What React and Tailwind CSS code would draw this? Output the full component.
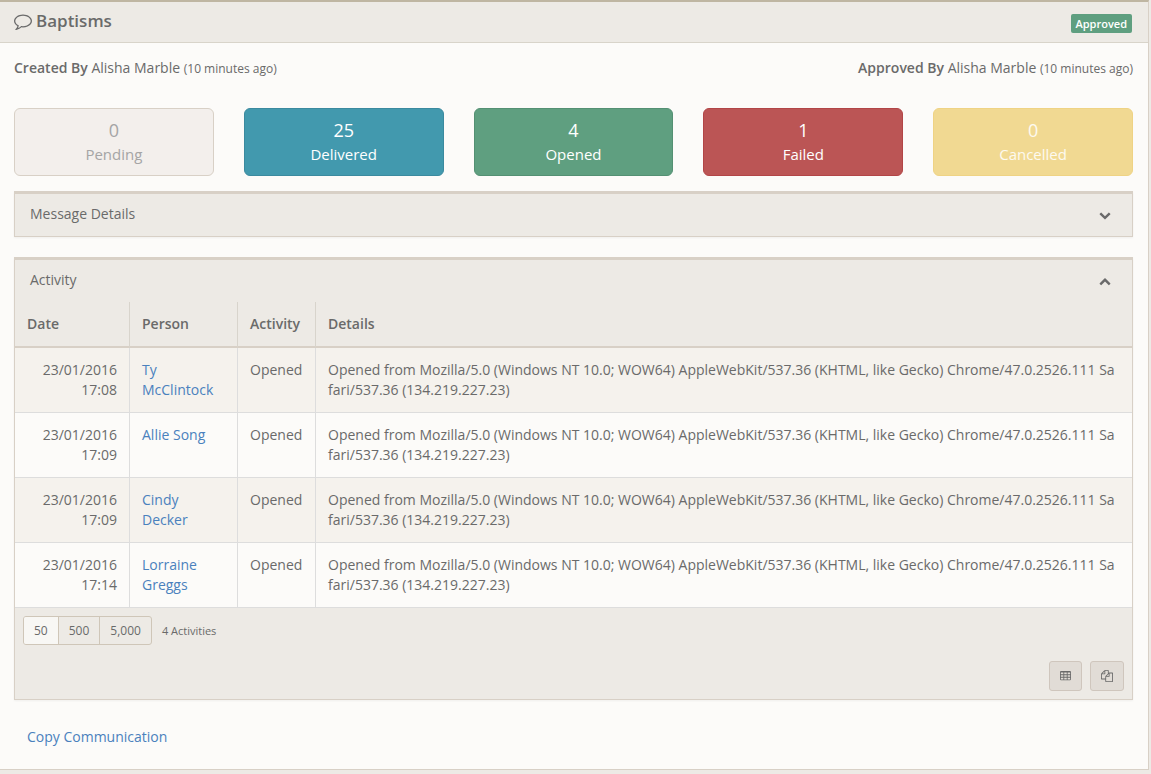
import React from "react";

const ICONS = {
  comment:
    "M896 384q-204 0-381.500 69.500t-282 187.500-104.500 255q0 112 71.500 213.500t201.500 175.500l87 50-27 96q-24 91-70 172 152-63 275-171l43-38 57 6q69 8 130 8 204 0 381.500-69.500t282-187.500 104.500-255-104.500-255-282-187.500-381.500-69.500zm896 512q0 174-120 321.500t-326 233-450 85.500q-70 0-145-8-198 175-460 242-49 14-114 22h-5q-15 0-27-10.500t-16-27.500v-1q-3-4-.5-12t2-10 4.500-9.500l6-9 7-8.500 8-9q7-8 31-34.500t34.500-38 31-39.500 32.500-51 27-59 26-76q-157-89-247.500-220t-90.500-281q0-130 71-248.500t191-204.500 286-136.500 348-50.500 348 50.500 286 136.500 191 204.500 71 248.500z",
  down:
    "M1683 808l-742 741q-19 19-45 19t-45-19l-742-741q-19-19-19-45.500t19-45.500l166-165q19-19 45-19t45 19l531 531 531-531q19-19 45-19t45 19l166 165q19 19 19 45.500t-19 45.500z",
  up:
    "M1683 1331l-166 165q-19 19-45 19t-45-19l-531-531-531 531q-19 19-45 19t-45-19l-166-165q-19-19-19-45.500t19-45.500l742-741q19-19 45-19t45 19l742 741q19 19 19 45.500t-19 45.500z",
  table:
    "M224 128H1568a160 160 0 0 1 160 160V1376a160 160 0 0 1-160 160H224a160 160 0 0 1-160-160V288a160 160 0 0 1 160-160zM192 384v256h384V384zM704 384v256h384V384zM1216 384v256h384V384zM192 768v256h384V768zM704 768v256h384V768zM1216 768v256h384V768zM192 1152v256h384v-256zM704 1152v256h384v-256zM1216 1152v256h384v-256z",
  copy:
    "M1696 384q40 0 68 28t28 68v1216q0 40-28 68t-68 28h-960q-40 0-68-28t-28-68v-288h-544q-40 0-68-28t-28-68v-672q0-40 20-88t48-76l408-408q28-28 76-48t88-20h416q40 0 68 28t28 68v328q68-40 128-40h416zm-544 213l-299 299h299v-299zm-640-384l-299 299h299v-299zm196 647l316-316v-416h-384v416q0 40-28 68t-68 28h-416v640h512v-256q0-40 20-88t48-76zm956 804v-1152h-384v416q0 40-28 68t-68 28h-416v640h896z",
};

function Icon({ name, className, viewBox = "0 0 1792 1792" }) {
  return (
    <svg viewBox={viewBox} fill="currentColor" fillRule="evenodd" aria-hidden="true" className={className}>
      <path d={ICONS[name]} />
    </svg>
  );
}

const STATS = [
  { count: 0, label: "Pending", style: "border-[#d8d0c6] bg-[#f3efec] text-[#a5a5a5]" },
  { count: 25, label: "Delivered", style: "border-[#3b8a9f] bg-[#4299ae] text-white" },
  { count: 4, label: "Opened", style: "border-[#549073] bg-[#5f9f80] text-white" },
  { count: 1, label: "Failed", style: "border-[#b24547] bg-[#bb5555] text-white" },
  { count: 0, label: "Cancelled", style: "border-[#efd384] bg-[#f1d992] text-[#fdfaf0]" },
];

const AGENT =
  "Opened from Mozilla/5.0 (Windows NT 10.0; WOW64) AppleWebKit/537.36 (KHTML, like Gecko) Chrome/47.0.2526.111 Safari/537.36 (134.219.227.23)";

const ROWS = [
  { date: "23/01/2016 17:08", person: "Ty McClintock" },
  { date: "23/01/2016 17:09", person: "Allie Song" },
  { date: "23/01/2016 17:09", person: "Cindy Decker" },
  { date: "23/01/2016 17:14", person: "Lorraine Greggs" },
];

function Byline({ label, name, when }) {
  return (
    <p>
      <strong className="font-semibold">{label}</strong> {name} <small className="text-xs">({when})</small>
    </p>
  );
}

function Panel({ title, open, children }) {
  return (
    <section className="border border-t-3 border-[#d8d0c6] bg-[#edeae5] shadow-xs">
      <h2>
        <button type="button" aria-expanded={open} className="flex w-full items-center justify-between pt-[10px] pr-[21px] pb-3 pl-[15px]">
          {title}
          <Icon name={open ? "up" : "down"} className="mt-[2px] size-3" />
        </button>
      </h2>
      {children}
    </section>
  );
}

export default function App() {
  return (
    <div className="min-h-screen bg-[#edeae5] pr-[2px] font-['Open_Sans',sans-serif] text-sm leading-5 text-[#6a6a6a]">
      <main className="border-t-2 border-r border-b border-t-[#bfb6a2] border-r-[#d8d0c6] border-b-[#d8d0c6] bg-[#fcfbf9]">
        <header className="flex items-center justify-between border-b border-[#d8d4ca] bg-[#edeae5] pt-[6px] pr-4 pb-[9px] pl-[14px]">
          <h1 className="flex items-center gap-1 text-[17px] leading-[25px] font-semibold">
            <Icon name="comment" className="size-[18px]" />
            Baptisms
          </h1>
          <span className="mt-[6px] rounded-xs bg-[#5f9f80] px-[5px] text-[11px] leading-[19px] font-semibold text-white">Approved</span>
        </header>

        <div className="pt-[15px] pr-[15px] pb-[22px] pl-[14px]">
          <div className="flex justify-between">
            <Byline label="Created By" name="Alisha Marble" when="10 minutes ago" />
            <Byline label="Approved By" name="Alisha Marble" when="10 minutes ago" />
          </div>

          <div className="mt-[30px] mb-[15px] grid grid-cols-5 gap-[30px]">
            {STATS.map((s) => (
              <button key={s.label} type="button" className={`rounded-md border pt-[10px] pb-2 text-center ${s.style}`}>
                <span className="block text-lg leading-[22px]">{s.count}</span>
                <span className="block text-[15px] leading-[26px]">{s.label}</span>
              </button>
            ))}
          </div>

          <Panel title="Message Details" open={false} />

          <div className="mt-5">
            <Panel title="Activity" open>
              <table className="w-full border-separate border-spacing-0 text-left">
                <thead>
                  <tr>
                    {["Date", "Person", "Activity", "Details"].map((h, i) => (
                      <th
                        key={h}
                        scope="col"
                        className={`border-r border-b-2 border-r-[#d8d4cc] border-b-[#d8d0c6] p-3 font-semibold last:border-r-0 ${["w-[115px]", "w-[108px]", "w-[78px]", ""][i]}`}
                      >
                        {h}
                      </th>
                    ))}
                  </tr>
                </thead>
                <tbody>
                  {ROWS.map((r) => (
                    <tr key={r.person} className="align-top odd:bg-[#f5f2ed] even:bg-[#fcfbf9]">
                      <td className="border-r border-b border-[#dddddd] p-3 text-right">{r.date}</td>
                      <td className="border-r border-b border-[#dddddd] p-3">
                        <a href="#person" className="text-[#4a81bd]">{r.person}</a>
                      </td>
                      <td className="border-r border-b border-[#dddddd] p-3">Opened</td>
                      <td className="border-b border-[#dddddd] py-3 pr-4 pl-3 break-all">{AGENT}</td>
                    </tr>
                  ))}
                </tbody>
              </table>

              <div className="p-2">
                <div className="flex items-center gap-[10px]">
                  <div className="flex divide-x divide-[#cfc6b8] overflow-hidden rounded-[3px] border border-[#cfc6b8] text-xs leading-[27px]">
                    <button type="button" aria-pressed="true" className="bg-[#f8f7f4] px-[10px]">50</button>
                    <button type="button" aria-pressed="false" className="px-[10px]">500</button>
                    <button type="button" aria-pressed="false" className="px-[10px]">5,000</button>
                  </div>
                  <span className="text-[11px]">4 Activities</span>
                </div>
                <div className="mt-4 flex justify-end gap-2">
                  <button type="button" aria-label="Export to table" className="rounded-[3px] border border-[#cfc6bd] bg-[#e1dcd6] px-[10px] py-2">
                    <Icon name="table" viewBox="64 0 1664 1792" className="h-3 w-[11px]" />
                  </button>
                  <button type="button" aria-label="Copy rows" className="rounded-[3px] border border-[#cfc6bd] bg-[#e1dcd6] px-[10px] py-2">
                    <Icon name="copy" className="size-3" />
                  </button>
                </div>
              </div>
            </Panel>
          </div>

          <div className="mt-[27px] pl-[13px]">
            <a href="#copy" className="text-[#4a81bd]">Copy Communication</a>
          </div>
        </div>
      </main>
    </div>
  );
}
